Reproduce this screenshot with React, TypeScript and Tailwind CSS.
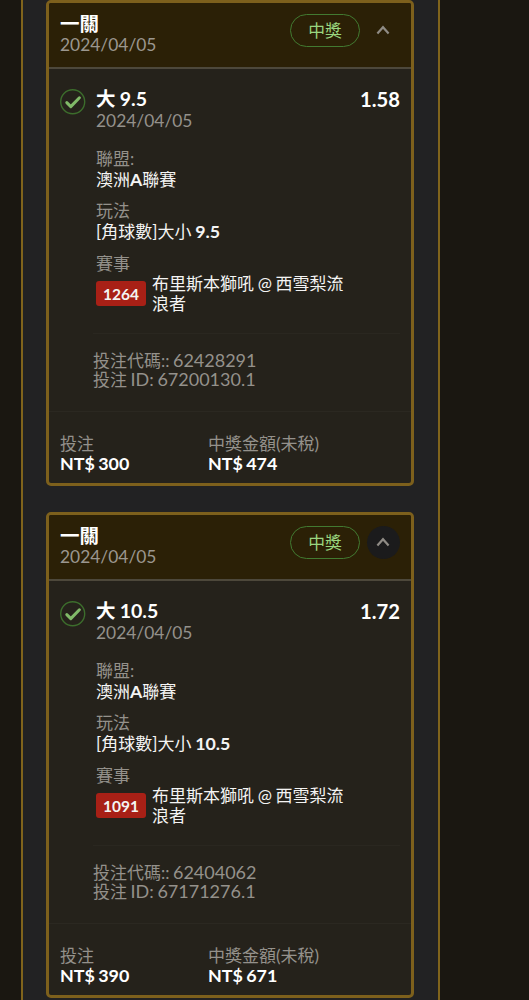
import clsx from "clsx";

interface IBet {
  title: string;
  date: string;
  pick: string;
  odds: string;
  league: [string, string, string];
  play: string;
  line: string;
  matchNo: string;
  match: string;
  code: string;
  betId: string;
  stake: string;
  payout: string;
  active?: boolean;
}

const bets: IBet[] = [
  {
    title: "一關",
    date: "2024/04/05",
    pick: "大 9.5",
    odds: "1.58",
    league: ["澳洲", "A", "聯賽"],
    play: "[角球數]大小",
    line: "9.5",
    matchNo: "1264",
    match: "布里斯本獅吼 @ 西雪梨流浪者",
    code: "62428291",
    betId: "67200130.1",
    stake: "NT$ 300",
    payout: "NT$ 474",
  },
  {
    title: "一關",
    date: "2024/04/05",
    pick: "大 10.5",
    odds: "1.72",
    league: ["澳洲", "A", "聯賽"],
    play: "[角球數]大小",
    line: "10.5",
    matchNo: "1091",
    match: "布里斯本獅吼 @ 西雪梨流浪者",
    code: "62404062",
    betId: "67171276.1",
    stake: "NT$ 390",
    payout: "NT$ 671",
    active: true,
  },
];

const CheckIcon = () => (
  <svg className="mt-[7px] size-[26px] shrink-0" viewBox="0 0 26 26" fill="none">
    <circle cx="12.7" cy="12.8" r="12" stroke="#3c6d2c" strokeWidth="1.4" />
    <path
      d="M6.8 13.6L10.8 17.6L19.4 8.8"
      stroke="#80b968"
      strokeWidth="3"
      strokeLinecap="round"
      strokeLinejoin="round"
    />
  </svg>
);

const ChevronUp = () => (
  <svg className="mr-px mb-[2px] size-3.5" viewBox="0 0 14 14" fill="none">
    <path d="M1.4 10.4L7 4.2L12.6 10.4" stroke="#8f8b85" strokeWidth="2.2" />
  </svg>
);

const BetCard = ({ bet }: { bet: IBet }) => {
  return (
    <div className="h-[486px] shrink-0 overflow-hidden rounded-[5px] border-[3px] border-[#7d601c] bg-[#25221b] text-[17px] leading-[20px]">
      <div className="flex h-[66px] items-start justify-between border-b-2 border-[#4d483b] bg-[#2b2006] px-[11px]">
        <div className="pt-[11px]">
          <p className="text-[19.5px] leading-[20px] font-bold text-white">{bet.title}</p>
          <p className="text-[17.4px] leading-[22px] text-[#9b978f]">{bet.date}</p>
        </div>
        <div className="flex items-center gap-[7px] pt-[11px]">
          <span className="flex h-[33px] w-[70px] items-center justify-center rounded-full border border-[#427a31] text-[16.8px] text-[#9ad67f]">
            中獎
          </span>
          <button
            className={clsx(
              "flex size-[33px] items-center justify-center rounded-full",
              bet.active && "bg-[#1b1b1c]",
            )}
          >
            <ChevronUp />
          </button>
        </div>
      </div>

      <div className="flex px-[11px] pt-[13px]">
        <CheckIcon />
        <div className="ml-[10px] flex-1">
          <div className="flex justify-between pt-[7px] text-[19.5px] leading-[20px] font-bold text-white">
            <p className="[word-spacing:-0.5px]">{bet.pick}</p>
            <p className="text-[20.2px]">{bet.odds}</p>
          </div>
          <p className="mt-px text-[17.4px] leading-[22px] text-[#94918b]">{bet.date}</p>

          <p className="mt-[16px] leading-[21px] text-[#94918b]">聯盟:</p>
          <p className="leading-[21px] text-[#f4f4f3]">
            {bet.league[0]}
            <b className="text-[17.6px]">{bet.league[1]}</b>
            {bet.league[2]}
          </p>
          <p className="mt-[10px] leading-[21px] text-[#94918b]">玩法</p>
          <p className="leading-[21px] text-[#f4f4f3] [word-spacing:-0.6px]">
            {bet.play} <b className="text-[17.8px]">{bet.line}</b>
          </p>
          <p className="mt-[10.5px] leading-[21px] text-[#94918b]">賽事</p>
          <div className="flex h-[40px] items-center gap-[6px] text-[#f4f4f3]">
            <span className="flex h-[25px] w-[50px] shrink-0 items-center justify-center rounded-[3px] bg-[#a82016] text-[15.5px] font-bold">
              {bet.matchNo}
            </span>
            <p className="w-[196px] leading-[19.5px] [word-spacing:-0.7px]">{bet.match}</p>
          </div>
        </div>
      </div>

      <div className="mt-[19px] mr-[11px] ml-[44px] border-t border-[#2a2720] pt-[17px] leading-[19px] text-[#94918b] [word-spacing:-0.9px]">
        <p>
          投注代碼:: <span className="text-[18px]">{bet.code}</span>
        </p>
        <p>
          投注 <span className="text-[18px]">ID: {bet.betId}</span>
        </p>
      </div>

      <div className="mt-[22px] flex border-t border-[#2b2821] px-[11px] pt-[22px] leading-[20px]">
        <div className="w-[148px]">
          <p className="text-[#94918b]">投注</p>
          <p className="text-[17.9px] leading-[19px] font-bold text-white [word-spacing:-1px]">{bet.stake}</p>
        </div>
        <div>
          <p className="text-[#94918b]">中獎金額(未稅)</p>
          <p className="text-[17.9px] leading-[19px] font-bold text-white [word-spacing:-1px]">{bet.payout}</p>
        </div>
      </div>
    </div>
  );
};

export default function App() {
  return (
    <div className="h-[1000px] overflow-hidden bg-[#1a1711] pl-[21px] font-['Lato','Noto_Sans_CJK_TC',sans-serif]">
      <div className="flex h-full w-[419px] flex-col gap-[26px] border-x-2 border-[#80641c] bg-[#222223] pr-[24px] pl-[23px]">
        {bets.map((bet) => (
          <BetCard key={bet.betId} bet={bet} />
        ))}
      </div>
    </div>
  );
}
